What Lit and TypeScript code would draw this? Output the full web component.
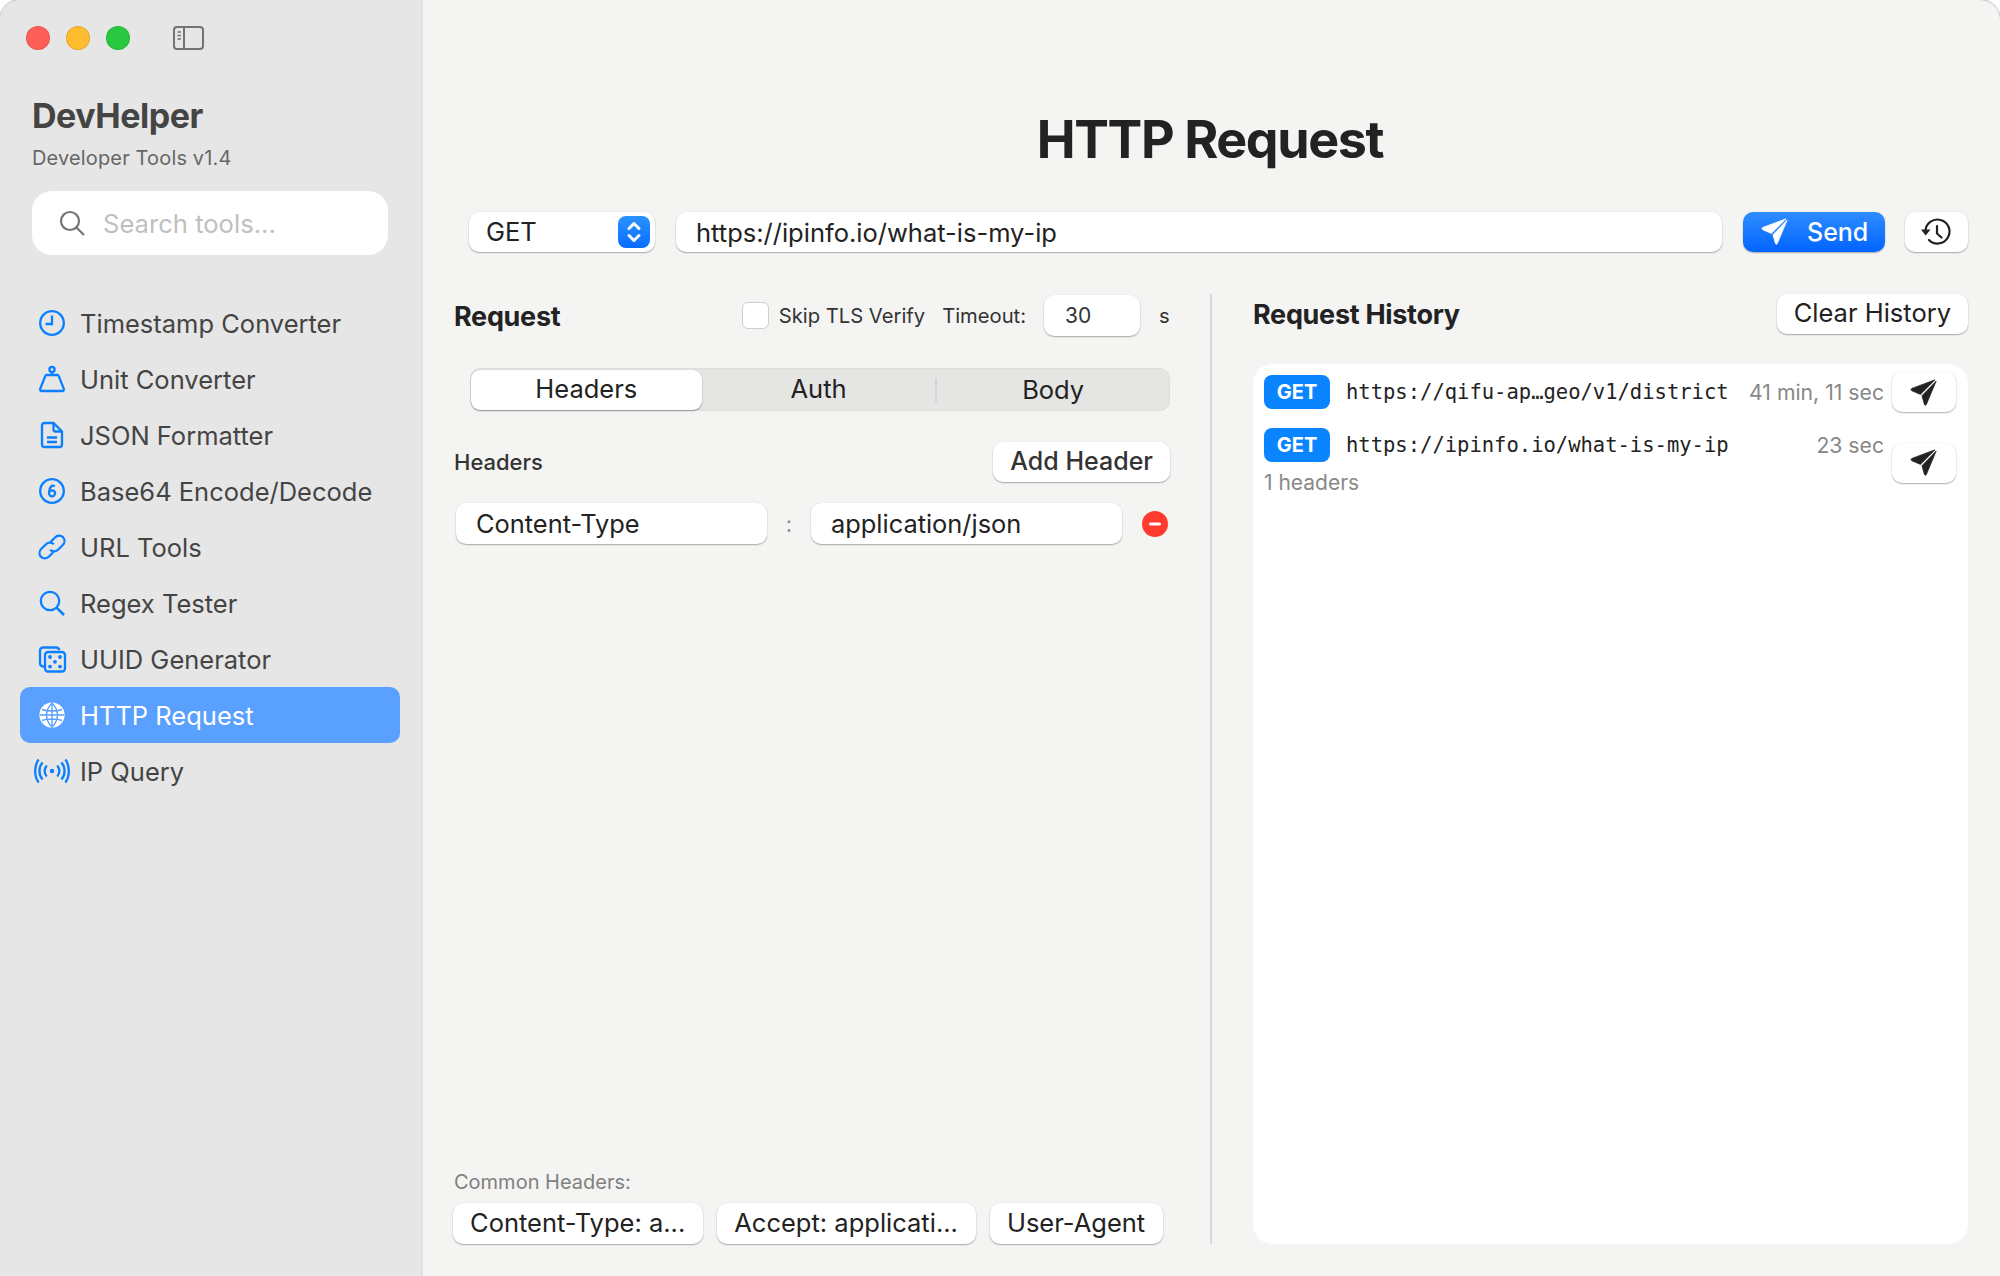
import { LitElement, html, css, svg } from 'lit';
import { customElement } from 'lit/decorators.js';
import { classMap } from 'lit/directives/class-map.js';

const plane = svg`<g fill="currentColor" stroke="currentColor" stroke-width=".7" stroke-linejoin="round">
  <path d="M25 .8L1.8 9.4Q0 10.5 1.8 11.8L10.4 15.4Z"/>
  <path d="M26.2 2L11.9 16.7L14.4 25.4Q15.3 27.2 16.4 25.4Z"/>
</g>`;

const navItems = [
  { label: 'Timestamp Converter', icon: svg`<circle cx="13" cy="13" r="11.8"/><path d="M13 5.5V14H6.5"/>` },
  { label: 'Unit Converter', icon: svg`<circle cx="13" cy="3.6" r="2.6"/><path d="M13 6.2V9M7.6 9H18.4C19 9 19.5 9.3 19.7 9.9L24.8 22.8C25.2 24 24.6 25 23.4 25H2.6C1.4 25 .8 24 1.2 22.8L6.3 9.9C6.5 9.3 7 9 7.6 9Z"/>` },
  { label: 'JSON Formatter', icon: svg`<path d="M5.5 1H14.5L23 9.5V22.5C23 24 22 25 20.5 25H5.5C4 25 3 24 3 22.5V3.5C3 2 4 1 5.5 1Z"/><path d="M14.5 1V7.5C14.5 8.8 15.2 9.5 16.5 9.5H23M8 15.5H18M8 20H18"/>` },
  { label: 'Base64 Encode/Decode', icon: svg`<circle cx="13" cy="13" r="11.8"/><path d="M15.8 8.3C14.6 7.5 13 7.6 12 8.6C10.9 9.7 10.2 11.4 10.2 13.6"/><circle cx="13" cy="15.3" r="3"/>` },
  { label: 'URL Tools', icon: svg`<path d="M11.5 8L16 3.5C18.3 1.2 21.8 1.2 24 3.2C26 5.4 26 8.8 23.8 11L19 15.8C16.8 18 13.3 18 11.2 15.8"/><path d="M14.5 18L10 22.5C7.7 24.8 4.2 24.8 2 22.8C0 20.6 0 17.2 2.2 15L7 10.2C9.2 8 12.7 8 14.8 10.2"/>` },
  { label: 'Regex Tester', icon: svg`<circle cx="11" cy="11" r="9.2"/><path d="M17.6 17.6L25 25" stroke-width="2.6"/>` },
  { label: 'UUID Generator', icon: svg`<path d="M5 20.5H4C2.4 20.5 1 19.3 1 17.6V4.5C1 2.8 2.4 1.5 4 1.5H17C18.6 1.5 20 2.6 20.2 4.2"/><rect x="6" y="6" width="20" height="19.5" rx="3"/><g fill="currentColor" stroke="none"><circle cx="11" cy="11" r="1.9"/><circle cx="21" cy="11" r="1.9"/><circle cx="16" cy="15.8" r="1.9"/><circle cx="11" cy="20.6" r="1.9"/><circle cx="21" cy="20.6" r="1.9"/></g>` },
  { label: 'HTTP Request', active: true, icon: svg`<circle cx="13" cy="13" r="12.6" fill="currentColor" stroke="none"/><g stroke="#5aa0ff" stroke-width="1.4"><path d="M13 1C9 5 7.5 9 7.5 13S9 21 13 25C17 21 18.5 17 18.5 13S17 5 13 1Z"/><path d="M13 1V25M3 7.5C8 9.5 18 9.5 23 7.5M1 13H25M3 18.5C8 16.5 18 16.5 23 18.5"/></g>` },
  { label: 'IP Query', wide: true, icon: svg`<circle cx="17" cy="13" r="2.2" fill="currentColor" stroke="none"/><path d="M11.8 7.5C9 10.5 9 15.5 11.8 18.5M22.2 7.5C25 10.5 25 15.5 22.2 18.5M7.6 4.5C3.4 9 3.4 17 7.6 21.5M26.4 4.5C30.6 9 30.6 17 26.4 21.5M3.6 1.5C-1 8 -1 18 3.6 24.5M30.4 1.5C35 8 35 18 30.4 24.5"/>` },
];

const historyRows = [
  { url: 'https://qifu-ap…geo/v1/district', time: '41 min, 11 sec', detail: '' },
  { url: 'https://ipinfo.io/what-is-my-ip', time: '23 sec', detail: '1 headers' },
];

@customElement('app-root')
export class AppRoot extends LitElement {
  static styles = css`
    :host {
      display: block;
      height: 1276px;
      overflow: hidden;
      background: #fff;
      font-family: Inter, 'Noto Sans', sans-serif;
      color: #222;
    }
    * { box-sizing: border-box; }

    .window {
      display: flex;
      height: 1276px;
      border-radius: 20px 20px 0 0;
      overflow: hidden;
      background: #f4f4f2;
      box-shadow: 0 0 0 1px #c4c4c4;
    }

    /* sidebar */
    .sidebar {
      width: 423px;
      flex: none;
      background: #e6e6e6;
      border-right: 2px solid #e0e0e0;
      padding: 26px 0 0 20px;
    }
    .titlebar { display: flex; align-items: center; height: 24px; padding-left: 6px; }
    .light { width: 24px; height: 24px; border-radius: 50%; margin-right: 16px; border: 1px solid rgba(0,0,0,.1); }
    .red { background: #ff5f57; }
    .yellow { background: #febc2e; }
    .green { background: #28c840; }
    .toggle { width: 31px; height: 24px; margin-left: 27px; color: #737373; display: block; }
    .brand { margin: 45px 0 0 12px; font-size: 34px; line-height: 42px; font-weight: 700; color: #444; letter-spacing: -0.45px; }
    .version { margin: 8px 0 0 12px; font-size: 20px; line-height: 26px; color: #666; letter-spacing: 0.15px; }
    .search {
      display: flex;
      align-items: center;
      width: 356px;
      height: 64px;
      margin: 20px 0 0 12px;
      padding-left: 27px;
      background: #fff;
      border-radius: 20px;
      font-size: 25.6px;
      color: #bfbfbf;
    }
    .search svg { width: 26px; height: 26px; margin-right: 18px; color: #757575; }
    .nav { margin-top: 40px; width: 380px; }
    .nav-item {
      display: flex;
      align-items: center;
      height: 56px;
      padding-left: 19px;
      border-radius: 10px;
      font-size: 25.5px;
      color: #444;
    }
    .nav-item svg {
      width: 26px;
      height: 26px;
      margin-right: 15px;
      flex: none;
      color: #0a7fff;
      fill: none;
      stroke: currentColor;
      stroke-width: 2.3;
      overflow: visible;
    }
    .nav-item svg.wide { width: 34px; margin: 0 11px 0 -4px; }
    .nav-item.active { background: #5aa0ff; color: #fff; }
    .nav-item.active svg { color: #fff; }

    /* main */
    .main { flex: 1; display: flex; flex-direction: column; padding: 0 32px 32px 31px; min-width: 0; }
    h1 {
      margin: 0;
      height: 212px;
      padding: 104px 2px 0 0;
      font-size: 52px;
      line-height: 72px;
      font-weight: 700;
      letter-spacing: -1.4px;
      text-align: center;
      color: #222;
    }
    .control {
      background: #fff;
      border-radius: 10px;
      box-shadow: 0 1px 1.5px rgba(0,0,0,.3), 0 0 1px rgba(0,0,0,.12);
      display: flex;
      align-items: center;
      flex: none;
    }
    .toolbar { display: flex; align-items: stretch; height: 40px; padding-left: 15px; font-size: 25.5px; }
    .select { width: 186px; padding: 0 5px 2px 17px; justify-content: space-between; }
    .stepper {
      width: 32px;
      height: 32px;
      margin-bottom: -2px;
      border-radius: 8px;
      background: linear-gradient(#2a93ff, #0a6cff);
    }
    .stepper svg { width: 32px; height: 32px; display: block; }
    .url { flex: 1; flex-shrink: 1; margin-left: 21px; padding-left: 20px; }
    .send {
      width: 142px;
      margin-left: 21px;
      padding: 0 0 1px 18px;
      background: linear-gradient(#2f8dff, #0064ff);
      color: #fff;
      font-weight: 500;
      font-size: 25px;
    }
    .send svg { width: 27px; height: 27px; margin-right: 19px; }
    .history-btn { width: 63px; margin-left: 20px; padding-right: 2px; justify-content: center; }
    .history-btn svg { width: 30px; height: 28px; }

    .columns { flex: 1; display: flex; margin-top: 42px; min-height: 0; }
    .left { width: 716px; flex: none; display: flex; flex-direction: column; }
    .divider { width: 2px; flex: none; margin: 0 41px 0 40px; background: #d9d9d9; }
    .right { flex: 1; display: flex; flex-direction: column; min-width: 0; }

    .panel-head { display: flex; align-items: center; height: 42px; font-size: 20.2px; color: #333; }
    h2 { margin: 0; font-size: 27px; font-weight: 700; color: #222; letter-spacing: -0.3px; }
    .panel-head h2 { flex: 1; padding-top: 2px; }
    .check {
      width: 27px;
      height: 27px;
      margin-right: 10px;
      background: #fff;
      border-radius: 6px;
      border: 1px solid #cfcfcf;
    }
    .timeout-label { margin-left: 17px; }
    .timeout { width: 96px; height: 41px; margin-left: 18px; padding-left: 21px; font-size: 21px; }
    .unit { margin-left: 19px; width: 11px; }

    .segments {
      display: flex;
      align-items: center;
      height: 43px;
      margin: 32px 0 0 16px;
      padding: 0 1px;
      background: #e5e5e4;
      border-radius: 10px;
      box-shadow: inset 0 0 0 1px rgba(0,0,0,.03);
      font-size: 25.5px;
    }
    .segment { display: flex; justify-content: center; align-items: center; height: 40px; padding-bottom: 2px; width: 235px; }
    .segment.on { width: 232px; background: #fff; border-radius: 9px; box-shadow: 0 1px 1.5px rgba(0,0,0,.35), 0 0 1px rgba(0,0,0,.15); }
    .segment.sep { border-left: 2px solid #d4d4d4; height: 24px; padding-bottom: 0; }

    .headers-head { display: flex; align-items: center; justify-content: space-between; margin-top: 31px; height: 40px; font-size: 22px; font-weight: 500; color: #333; }
    .btn { height: 40px; padding: 0 17px 3px; font-size: 25.5px; white-space: nowrap; }
    .btn.add { font-size: 25px; }
    .headers-row { display: flex; align-items: center; height: 41px; margin-top: 21px; padding-left: 2px; font-size: 25.4px; }
    .field { width: 311px; height: 41px; padding-left: 20px; }
    .colon { width: 44px; text-align: center; font-size: 22px; color: #8a8a8a; }
    .remove { width: 26px; height: 26px; margin-left: 20px; display: block; }

    .spacer { flex: 1; }
    .common-label { font-size: 20px; line-height: 26px; color: #808080; margin-bottom: 8px; }
    .chips { display: flex; gap: 14px; margin-left: -1px; }
    .chip { height: 41px; padding: 0 18px 3px 17px; font-size: 25.5px; white-space: nowrap; }

    .history-head { display: flex; align-items: center; justify-content: space-between; height: 40px; }
    .card { flex: 1; margin-top: 30px; padding: 8px 12px 0 11px; background: #fff; border-radius: 20px; }
    .history-row { display: flex; align-items: center; margin-bottom: 16px; }
    .history-main { flex: 1; min-width: 0; margin-right: 8px; }
    .history-line { display: flex; align-items: center; height: 34px; }
    .badge {
      width: 66px;
      height: 34px;
      line-height: 34px;
      text-align: center;
      background: #0a84ff;
      color: #fff;
      border-radius: 8px;
      font-size: 20px;
      font-weight: 700;
    }
    .history-url { flex: 1; margin-left: 16px; font-family: 'DejaVu Sans Mono', 'Liberation Mono', monospace; font-size: 20.5px; color: #222; white-space: nowrap; }
    .time { font-size: 21.2px; color: #888; }
    .detail { font-size: 21px; line-height: 28px; margin-top: 7px; color: #888; }
    .resend { width: 64px; height: 40px; justify-content: center; color: #222; }
    .resend svg { width: 27px; height: 27px; margin-right: 1px; }
  `;

  render() {
    return html`
      <div class="window">
        <aside class="sidebar">
          <div class="titlebar">
            <div class="light red"></div>
            <div class="light yellow"></div>
            <div class="light green"></div>
            <svg class="toggle" viewBox="0 0 31 24" fill="none" stroke="currentColor" stroke-width="2">
              <rect x="1" y="1" width="29" height="22" rx="3"/>
              <path d="M11 1V23"/>
              <path d="M4.5 6H8M4.5 9.5H8M4.5 13H8" stroke-width="1.4"/>
            </svg>
          </div>
          <div class="brand">DevHelper</div>
          <div class="version">Developer Tools v1.4</div>
          <div class="search">
            <svg viewBox="0 0 26 26" fill="none" stroke="currentColor" stroke-width="2.2">
              <circle cx="11" cy="11" r="9"/><path d="M17.5 17.5L25 25"/>
            </svg>
            Search tools...
          </div>
          <nav class="nav">
            ${navItems.map(
              (item) => html`
                <div class="nav-item ${classMap({ active: !!item.active })}">
                  <svg class=${item.wide ? 'wide' : ''} viewBox="0 0 ${item.wide ? 34 : 26} 26">${item.icon}</svg>
                  ${item.label}
                </div>
              `
            )}
          </nav>
        </aside>

        <main class="main">
          <h1>HTTP Request</h1>
          <div class="toolbar">
            <div class="control select">
              GET
              <div class="stepper">
                <svg viewBox="0 0 32 32" fill="none" stroke="#fff" stroke-width="3" stroke-linecap="round" stroke-linejoin="round">
                  <path d="M11 12.5L16 7.5L21 12.5M11 19.5L16 24.5L21 19.5"/>
                </svg>
              </div>
            </div>
            <div class="control url">https://ipinfo.io/what-is-my-ip</div>
            <div class="control send"><svg viewBox="0 0 27 27">${plane}</svg>Send</div>
            <div class="control history-btn">
              <svg viewBox="0 0 30 28">
                <g fill="none" stroke="#222" stroke-width="2.2" stroke-linecap="round" stroke-linejoin="round">
                  <path d="M4.5 13.5A12 12 0 1 1 8 22"/>
                  <path d="M16 8V15.5L20.5 19.5"/>
                </g>
                <path d="M0 11.5H9.5L4.7 17.5Z" fill="#222"/>
              </svg>
            </div>
          </div>

          <div class="columns">
            <section class="left">
              <div class="panel-head">
                <h2>Request</h2>
                <div class="check"></div>
                <span>Skip TLS Verify</span>
                <span class="timeout-label">Timeout:</span>
                <div class="control timeout">30</div>
                <span class="unit">s</span>
              </div>
              <div class="segments">
                <div class="segment on">Headers</div>
                <div class="segment">Auth</div>
                <div class="segment sep">Body</div>
              </div>
              <div class="headers-head">
                <span>Headers</span>
                <div class="control btn add">Add Header</div>
              </div>
              <div class="headers-row">
                <div class="control field">Content-Type</div>
                <div class="colon">:</div>
                <div class="control field">application/json</div>
                <svg class="remove" viewBox="0 0 26 26">
                  <circle cx="13" cy="13" r="13" fill="#ff3b30"/>
                  <rect x="7" y="11.5" width="12" height="3" rx="1.5" fill="#fff"/>
                </svg>
              </div>
              <div class="spacer"></div>
              <div class="common-label">Common Headers:</div>
              <div class="chips">
                <div class="control chip">Content-Type: a...</div>
                <div class="control chip">Accept: applicati...</div>
                <div class="control chip">User-Agent</div>
              </div>
            </section>

            <div class="divider"></div>

            <section class="right">
              <div class="history-head">
                <h2>Request History</h2>
                <div class="control btn">Clear History</div>
              </div>
              <div class="card">
                ${historyRows.map(
                  (row) => html`
                    <div class="history-row">
                      <div class="history-main">
                        <div class="history-line">
                          <div class="badge">GET</div>
                          <div class="history-url">${row.url}</div>
                          <div class="time">${row.time}</div>
                        </div>
                        ${row.detail ? html`<div class="detail">${row.detail}</div>` : ''}
                      </div>
                      <div class="control resend"><svg viewBox="0 0 27 27">${plane}</svg></div>
                    </div>
                  `
                )}
              </div>
            </section>
          </div>
        </main>
      </div>
    `;
  }
}
